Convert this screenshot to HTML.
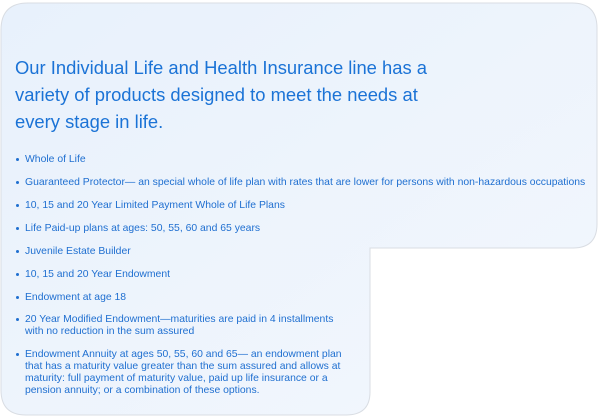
<!DOCTYPE html>
<html><head><meta charset="utf-8"><style>
html,body{margin:0;padding:0;width:598px;height:417px;background:#fff;overflow:hidden;font-family:"Liberation Sans",sans-serif;color:#1f6fd0}
.l{position:absolute;white-space:nowrap;font-size:10.4px;line-height:12px}
.h{position:absolute;white-space:nowrap;font-size:18.4px;line-height:27px;left:15px;color:#1b73d6}
.b{position:absolute;left:16px;width:3px;height:3px;border-radius:50%;background:#1f6fd0}
</style></head><body>
<svg width="598" height="417" style="position:absolute;left:0;top:0">
<defs><linearGradient id="g" x1="0" y1="0" x2="1" y2="1"><stop offset="0" stop-color="#e8f1fc"/><stop offset="1" stop-color="#f3f7fd"/></linearGradient></defs>
<path d="M28 3 H572 Q597 3 597 28 V224 Q597 248 573 248 H370 V392 Q370 415 346 415 H26 Q1 415 1 390 V30 Q1 3 28 3 Z" fill="url(#g)" stroke="#d9dde3" stroke-width="1"/>
</svg>
<div class="h" style="top:54px">Our Individual Life and Health Insurance line has a</div>
<div class="h" style="top:81px">variety of products designed to meet the needs at</div>
<div class="h" style="top:108px">every stage in life.</div>
<div class="b" style="top:158px"></div><div class="l" style="left:25px;top:154px">Whole of Life</div>
<div class="b" style="top:181px"></div><div class="l" style="left:25px;top:177px">Guaranteed Protector— an special whole of life plan with rates that are lower for persons with non-hazardous occupations</div>
<div class="b" style="top:204px"></div><div class="l" style="left:25px;top:200px">10, 15 and 20 Year Limited Payment Whole of Life Plans</div>
<div class="b" style="top:227px"></div><div class="l" style="left:25px;top:223px">Life Paid-up plans at ages: 50, 55, 60 and 65 years</div>
<div class="b" style="top:250px"></div><div class="l" style="left:25px;top:246px">Juvenile Estate Builder</div>
<div class="b" style="top:273px"></div><div class="l" style="left:25px;top:269px">10, 15 and 20 Year Endowment</div>
<div class="b" style="top:296px"></div><div class="l" style="left:25px;top:292px">Endowment at age 18</div>
<div class="b" style="top:318px"></div><div class="l" style="left:25px;top:314px">20 Year Modified Endowment—maturities are paid in 4 installments<br>with no reduction in the sum assured</div>
<div class="b" style="top:353px"></div><div class="l" style="left:25px;top:349px">Endowment Annuity at ages 50, 55, 60 and 65— an endowment plan<br>that has a maturity value greater than the sum assured and allows at<br>maturity: full payment of maturity value, paid up life insurance or a<br>pension annuity; or a combination of these options.</div>
</body></html>
